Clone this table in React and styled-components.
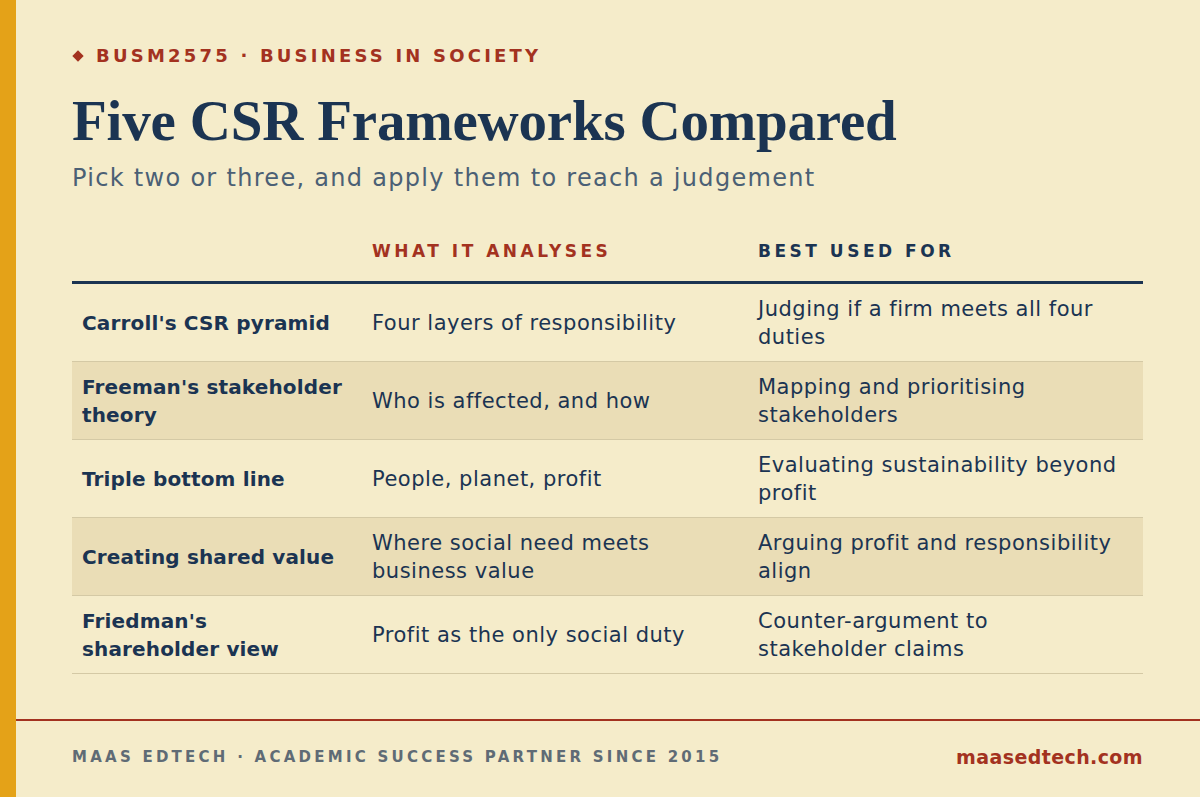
import React from "react";
import styled, { createGlobalStyle } from "styled-components";

const Global = createGlobalStyle`
  html, body { margin: 0; padding: 0; }
  body { background: #F5ECCA; }
  * { box-sizing: border-box; }
`;

const Page = styled.div`
  width: 1200px;
  height: 797px;
  display: flex;
  background: #F5ECCA;
  overflow: hidden;
  font-family: "DejaVu Sans", "Noto Sans", sans-serif;
  color: #1B3452;
`;

const SideBar = styled.div`
  width: 16px;
  flex: none;
  background: #E4A218;
`;

const Main = styled.div`
  flex: 1;
  display: flex;
  flex-direction: column;
`;

const Content = styled.div`
  flex: 1;
  padding: 44px 57px 0 56px;
`;

const Eyebrow = styled.div`
  display: flex;
  align-items: center;
  gap: 14px;
  font-size: 18px;
  font-weight: 700;
  letter-spacing: 3.2px;
  color: #A3321F;
  line-height: 24px;
`;

const Diamond = styled.span`
  width: 8px;
  height: 8px;
  background: #A3321F;
  transform: rotate(45deg);
  margin-left: 2px;
`;

const Title = styled.h1`
  margin: 21px 0 0;
  font-family: "Liberation Serif", "DejaVu Serif", serif;
  font-weight: 700;
  font-size: 57px;
  line-height: 64px;
  color: #1B3452;
  letter-spacing: -0.2px;
`;

const Subtitle = styled.p`
  margin: 10px 0 0;
  font-size: 24px;
  line-height: 30px;
  letter-spacing: 1.3px;
  color: #4B6075;
`;

const Table = styled.div`
  margin-top: 47px;
  display: grid;
  grid-template-columns: 290px 386px 1fr;
`;

const HeadCell = styled.div`
  padding: 0 10px 19px;
  font-size: 17px;
  font-weight: 800;
  letter-spacing: 3.5px;
  line-height: 22px;
  color: ${(p) => (p.$accent ? "#A3321F" : "#1B3452")};
  border-bottom: 3px solid #1B3452;
`;

const Cell = styled.div`
  display: flex;
  align-items: center;
  min-height: 78px;
  padding: 10px 10px;
  white-space: pre-line;
  font-size: ${(p) => (p.$bold ? "20px" : "21px")};
  letter-spacing: ${(p) => (p.$bold ? "0.15px" : "0.5px")};
  line-height: 28px;
  font-weight: ${(p) => (p.$bold ? 700 : 400)};
  color: #1B3452;
  background: ${(p) => (p.$shade ? "#EADDB6" : "transparent")};
  border-bottom: 1px solid #D4C9A5;
`;

const Footer = styled.div`
  border-top: 2px solid #A3321F;
  height: 78px;
  padding: 0 57px 5px 56px;
  display: flex;
  align-items: center;
  justify-content: space-between;
`;

const FooterNote = styled.div`
  font-size: 15px;
  font-weight: 700;
  letter-spacing: 3.25px;
  color: #5F6B75;
`;

const FooterLink = styled.div`
  font-size: 19px;
  font-weight: 800;
  letter-spacing: 0.4px;
  color: #A3321F;
`;

const rows = [
  ["Carroll's CSR pyramid", "Four layers of responsibility", "Judging if a firm meets all four\nduties"],
  ["Freeman's stakeholder\ntheory", "Who is affected, and how", "Mapping and prioritising\nstakeholders"],
  ["Triple bottom line", "People, planet, profit", "Evaluating sustainability beyond\nprofit"],
  ["Creating shared value", "Where social need meets\nbusiness value", "Arguing profit and responsibility\nalign"],
  ["Friedman's\nshareholder view", "Profit as the only social duty", "Counter-argument to\nstakeholder claims"],
];

export default function App() {
  return (
    <>
      <Global />
      <Page>
        <SideBar />
        <Main>
          <Content>
            <Eyebrow>
              <Diamond />
              <span>BUSM2575 · BUSINESS IN SOCIETY</span>
            </Eyebrow>
            <Title>Five CSR Frameworks Compared</Title>
            <Subtitle>Pick two or three, and apply them to reach a judgement</Subtitle>
            <Table>
              <HeadCell />
              <HeadCell $accent>WHAT IT ANALYSES</HeadCell>
              <HeadCell>BEST USED FOR</HeadCell>
              {rows.map((r, i) => (
                <React.Fragment key={i}>
                  <Cell $bold $shade={i % 2 === 1}>{r[0]}</Cell>
                  <Cell $shade={i % 2 === 1}>{r[1]}</Cell>
                  <Cell $shade={i % 2 === 1}>{r[2]}</Cell>
                </React.Fragment>
              ))}
            </Table>
          </Content>
          <Footer>
            <FooterNote>MAAS EDTECH · ACADEMIC SUCCESS PARTNER SINCE 2015</FooterNote>
            <FooterLink>maasedtech.com</FooterLink>
          </Footer>
        </Main>
      </Page>
    </>
  );
}
